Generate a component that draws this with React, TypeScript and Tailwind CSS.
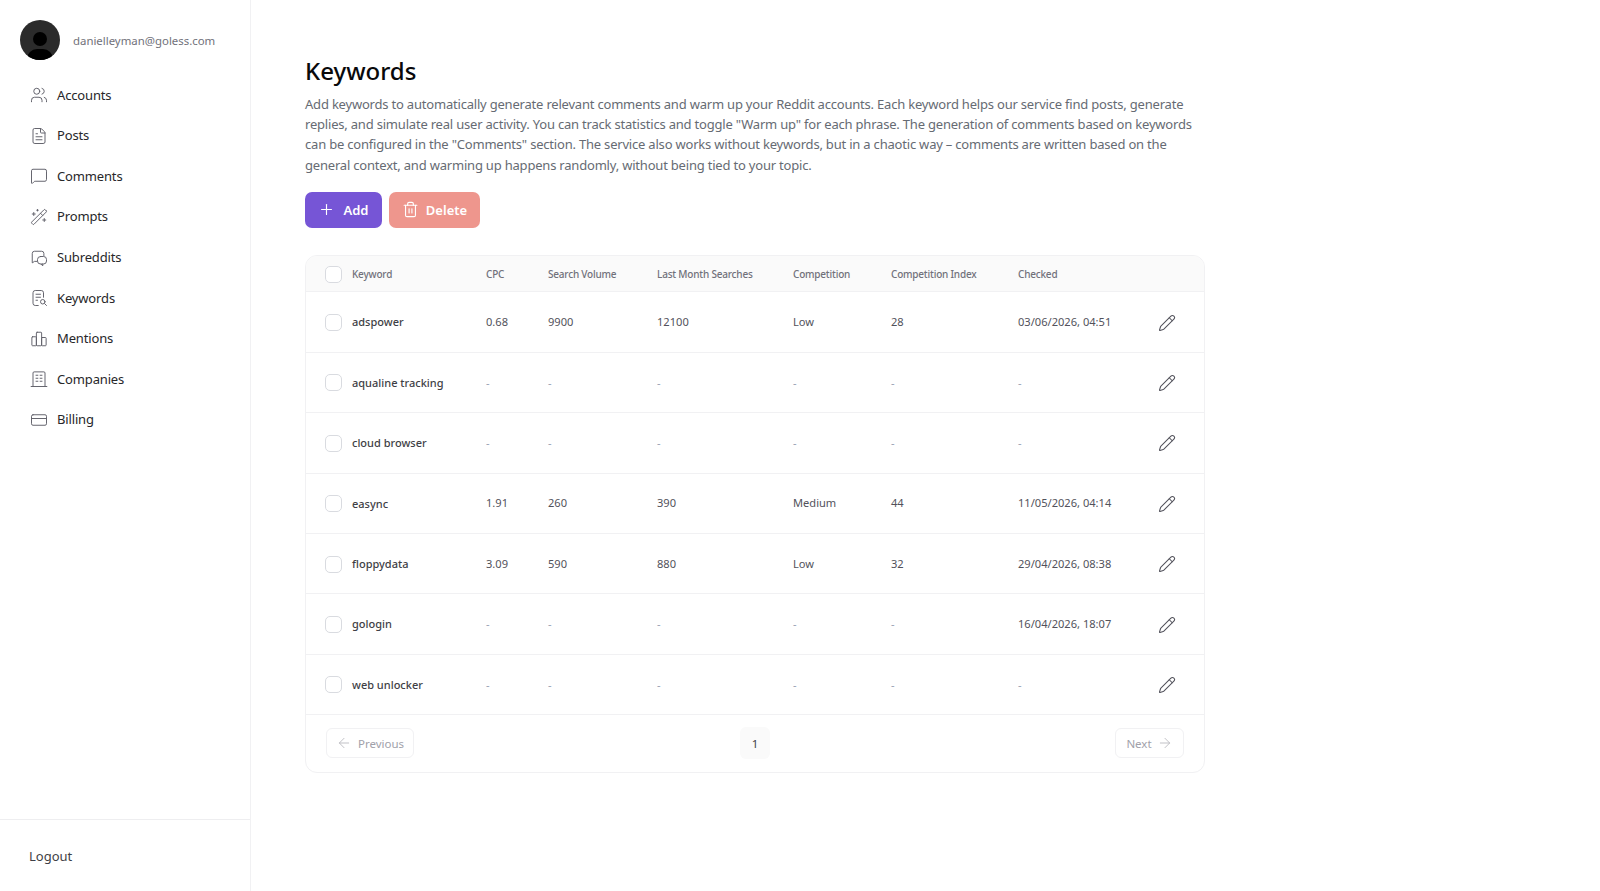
import { ArrowLeft, ArrowRight, CreditCard, FileText, MessageSquare, Pencil, Plus, Trash2, Users, WandSparkles } from 'lucide-react'
import type { ReactNode } from 'react'

function Svg({ children }: { children: ReactNode }) {
  return (
    <svg viewBox="0 0 24 24" fill="none" stroke="currentColor" strokeWidth={1.3} strokeLinecap="round" strokeLinejoin="round" className="w-[18px] h-[18px]">
      {children}
    </svg>
  )
}

const SubredditsIcon = () => (
  <Svg>
    <path d="M9 16.500H6l-3 2V6a3 3 0 0 1 3-3h9.500a3 3 0 0 1 3 3v3" />
    <rect x="10" y="10" width="12" height="10" rx="4" />
    <path d="M17 20v2.500L14.500 20" />
  </Svg>
)

const KeywordsIcon = () => (
  <Svg>
    <path d="M11 22H7a3 3 0 0 1-3-3V5a3 3 0 0 1 3-3h8a3 3 0 0 1 3 3v6" />
    <path d="M8 7h6M8 11h6M8 15h2" />
    <circle cx="17" cy="17" r="3" />
    <path d="m19.500 19.500 2.500 2.500" />
  </Svg>
)

const MentionsIcon = () => (
  <Svg>
    <rect x="2.500" y="9" width="6" height="12" rx="1" />
    <rect x="8.500" y="3" width="7" height="18" rx="1" />
    <rect x="15.500" y="10" width="6" height="11" rx="1" />
  </Svg>
)

const CompaniesIcon = () => (
  <Svg>
    <path d="M1.500 22h21" />
    <path d="M4 22V4a1.500 1.500 0 0 1 1.500-1.500h13A1.500 1.500 0 0 1 20 4v18" />
    <path d="M8 7h2.500M13.500 7H16M8 11h2.500M13.500 11H16M8 15h2.500M13.500 15H16" />
  </Svg>
)

const lucide = { size: 18, strokeWidth: 1.3 }

const navItems: { label: string; icon: ReactNode }[] = [
  { label: 'Accounts', icon: <Users {...lucide} /> },
  { label: 'Posts', icon: <FileText {...lucide} /> },
  { label: 'Comments', icon: <MessageSquare {...lucide} /> },
  { label: 'Prompts', icon: <WandSparkles {...lucide} /> },
  { label: 'Subreddits', icon: <SubredditsIcon /> },
  { label: 'Keywords', icon: <KeywordsIcon /> },
  { label: 'Mentions', icon: <MentionsIcon /> },
  { label: 'Companies', icon: <CompaniesIcon /> },
  { label: 'Billing', icon: <CreditCard {...lucide} /> },
]

const rows = [
  ['adspower', '0.68', '9900', '12100', 'Low', '28', '03/06/2026, 04:51'],
  ['aqualine tracking', '-', '-', '-', '-', '-', '-'],
  ['cloud browser', '-', '-', '-', '-', '-', '-'],
  ['easync', '1.91', '260', '390', 'Medium', '44', '11/05/2026, 04:14'],
  ['floppydata', '3.09', '590', '880', 'Low', '32', '29/04/2026, 08:38'],
  ['gologin', '-', '-', '-', '-', '-', '16/04/2026, 18:07'],
  ['web unlocker', '-', '-', '-', '-', '-', '-'],
]

const columns = 'grid grid-cols-[27px_134px_62px_109px_136px_98px_127px_140px_1fr] items-center'

function Checkbox() {
  return <div className="w-[17px] h-[17px] rounded-[5px] border border-[#d9dbe0] bg-white" />
}

function Cell({ value }: { value: string }) {
  return <div className={value === '-' ? 'text-[#98a2b3]' : 'text-[#52525b]'}>{value}</div>
}

export default function App() {
  return (
    <div className="flex h-[891px] bg-white font-['Noto_Sans',sans-serif]">
      <aside className="flex w-[251px] shrink-0 flex-col border-r border-[#f1f1f3]">
        <div className="flex items-center gap-[13px] pl-5 pt-5">
          <div className="relative h-10 w-10 overflow-hidden rounded-full bg-[#2b2b2b]">
            <div className="absolute left-[13px] top-[12px] h-[14px] w-[14px] rounded-full bg-black" />
            <div className="absolute left-[7px] top-[29px] h-[20px] w-[26px] rounded-full bg-black" />
          </div>
          <span className="pt-[2px] text-[11.4px] text-[#71717a]">danielleyman@goless.com</span>
        </div>
        <nav className="flex flex-1 flex-col pl-[30px] pt-[15px]">
          {navItems.map((item) => (
            <div key={item.label} className="flex h-[40.6px] items-center gap-[9px] text-[13px] tracking-[-0.15px] text-[#27272a]">
              <span className="text-[#62626b]">{item.icon}</span>
              {item.label}
            </div>
          ))}
        </nav>
        <div className="flex h-[72px] items-center border-t border-[#eeeef0] pl-[29px] pt-[3px] text-[13px] text-[#3f3f46]">
          Logout
        </div>
      </aside>

      <main className="flex-1 pl-[54px] pt-[53px]">
        <h1 className="text-[24px] font-medium leading-[36px] text-[#09090b]">Keywords</h1>
        <p className="mt-[5px] w-[899px] text-[13px] leading-[20.2px] tracking-[-0.2px] text-[#666b73]">
          Add keywords to automatically generate relevant comments and warm up your Reddit accounts. Each keyword helps our service find posts, generate replies, and simulate real user activity. You can track statistics and toggle "Warm up" for each phrase. The generation of comments based on keywords can be configured in the "Comments" section. The service also works without keywords, but in a chaotic way – comments are written based on the general context, and warming up happens randomly, without being tied to your topic.
        </p>
        <div className="mt-[17px] flex gap-[7px]">
          <button className="flex h-[36px] w-[77px] items-center justify-center gap-[8px] rounded-[7px] bg-[#7655d6] text-[13px] font-semibold text-white">
            <Plus size={17} strokeWidth={1.6} />
            <span className="pt-[1px]">Add</span>
          </button>
          <button className="flex h-[36px] w-[91px] items-center justify-center gap-[7px] rounded-[7px] bg-[#ee968d] text-[13px] font-semibold text-white">
            <Trash2 size={17} strokeWidth={1.6} />
            <span className="pt-[1px]">Delete</span>
          </button>
        </div>

        <div className="mt-[27px] w-[900px] overflow-hidden rounded-[12px] border border-[#f1f1f3]">
          <div className={`${columns} h-[36.6px] border-b border-[#f1f1f3] bg-[#fafafa] pl-[19px] pt-[2px] text-[10px] font-medium tracking-[-0.2px] text-[#71717a]`}>
            <Checkbox />
            <div>Keyword</div>
            <div>CPC</div>
            <div>Search Volume</div>
            <div>Last Month Searches</div>
            <div>Competition</div>
            <div>Competition Index</div>
            <div>Checked</div>
          </div>
          {rows.map((row) => (
            <div key={row[0]} className={`${columns} h-[60.4px] border-b border-[#f1f1f3] pl-[19px] pt-[1px] text-[11.1px]`}>
              <Checkbox />
              <div className="text-[11px] font-medium text-[#3f3f46]">{row[0]}</div>
              {row.slice(1).map((value, i) => (
                <Cell key={i} value={value} />
              ))}
              <div className="text-[#52525b]">
                <Pencil size={18} strokeWidth={1.4} />
              </div>
            </div>
          ))}
          <div className="grid h-[57px] grid-cols-[1fr_auto_1fr] items-center px-[20px] pb-[1px] text-[11.5px]">
            <button className="flex h-[30px] w-[88px] items-center justify-center gap-[6px] rounded-[6px] border border-[#f1f1f3] text-[#a1a1aa]">
              <ArrowLeft size={16} strokeWidth={1.4} className="text-[#bcbcc2]" />
              Previous
            </button>
            <div className="flex h-[32px] w-[30px] items-center justify-center rounded-[6px] bg-[#fafafa] text-[#3f3f46]">1</div>
            <button className="flex h-[30px] w-[69px] items-center justify-center gap-[5px] justify-self-end rounded-[6px] border border-[#f1f1f3] text-[#a1a1aa]">
              Next
              <ArrowRight size={16} strokeWidth={1.4} className="text-[#bcbcc2]" />
            </button>
          </div>
        </div>
      </main>
    </div>
  )
}
